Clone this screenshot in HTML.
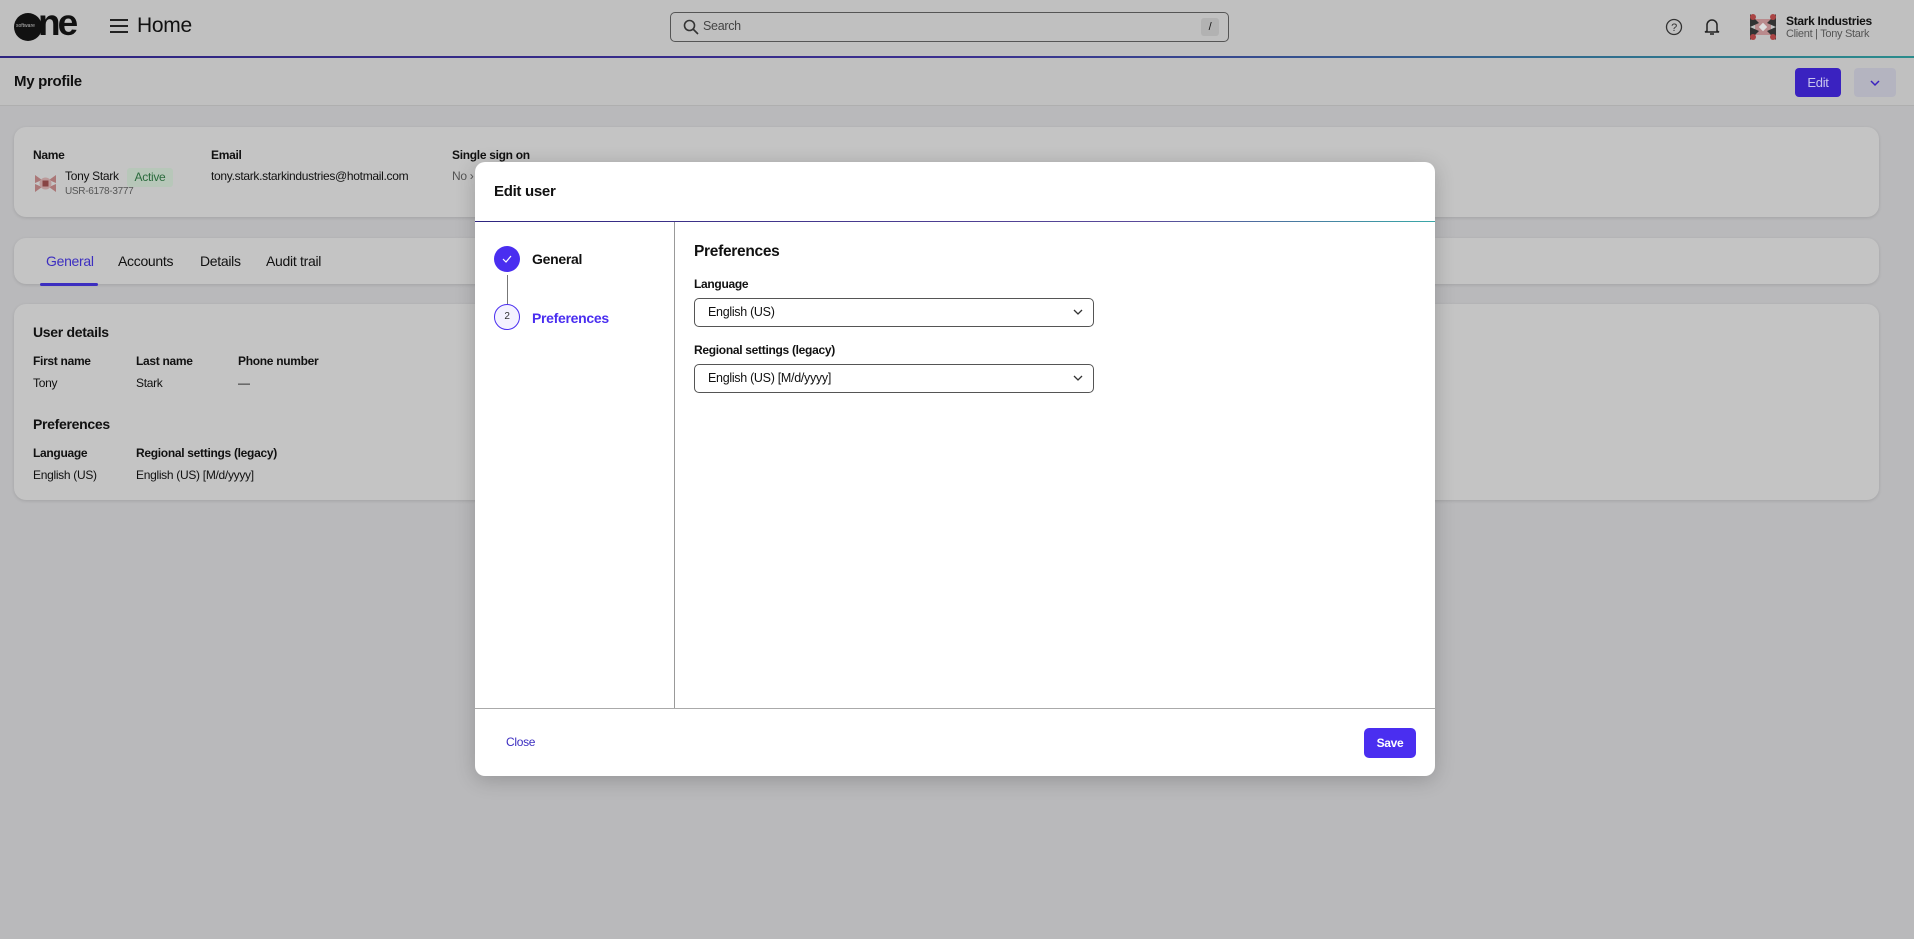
<!DOCTYPE html>
<html><head><meta charset="utf-8">
<style>
*{box-sizing:border-box;margin:0;padding:0}
body{width:1914px;height:939px;overflow:hidden;background:#b9b9bb;font-family:"Liberation Sans",Arial,sans-serif;color:#111;position:relative;font-size:13px;letter-spacing:-0.3px}
.abs{position:absolute}
.hdr{left:0;top:0;width:1914px;height:56px;background:#c0c0c0}
.grad{left:0;top:56px;width:1914px;height:2px;background:linear-gradient(90deg,#2e2580 0%,#3b2f8f 50%,#2a8c8c 100%)}
.sub{left:0;top:58px;width:1914px;height:48px;background:#c0c0c0;border-bottom:1px solid #afafaf}
.card{background:#c4c4c4;border-radius:12px;box-shadow:0 1px 3px rgba(0,0,0,.12)}
.lbl{font-weight:bold;font-size:12px;color:#111}
.modal{left:475px;top:162px;width:960px;height:614px;background:#fff;border-radius:10px;box-shadow:0 4px 20px rgba(0,0,0,.2);overflow:hidden}
.sel{position:absolute;left:219px;width:400px;height:29px;border:1px solid #555;border-radius:5px;padding-left:13px;line-height:27px;font-size:12.5px}
.sel svg{position:absolute;right:10px;top:9px}
</style></head><body>
<div class="abs hdr"></div>
<div class="abs" style="left:14px;top:13px;width:28px;height:28px;border-radius:50%;background:#111"></div>
<div class="abs" style="left:16px;top:23px;font-size:5px;color:#bbb;letter-spacing:0">software</div>
<div class="abs" style="left:38px;top:2px;font-size:37px;font-weight:bold;letter-spacing:-3px;color:#111">ne</div>
<svg class="abs" style="left:110px;top:18px" width="18" height="16"><path d="M0 2h18M0 8h18M0 14h18" stroke="#222" stroke-width="2"/></svg>
<div class="abs" style="left:137px;top:14px;font-size:21px;color:#111">Home</div>
<div class="abs" style="left:670px;top:12px;width:559px;height:30px;border:1px solid #555;border-radius:5px"></div>
<svg class="abs" style="left:683px;top:19px" width="16" height="16"><circle cx="6.5" cy="6.5" r="5" fill="none" stroke="#333" stroke-width="1.6"/><path d="M10 10l5 5" stroke="#333" stroke-width="1.6"/></svg>
<div class="abs" style="left:703px;top:19px;font-size:12.5px;color:#444">Search</div>
<div class="abs" style="left:1201px;top:18px;width:18px;height:18px;border-radius:3px;background:#b2b2b2;font-size:11px;text-align:center;line-height:18px">/</div>
<svg class="abs" style="left:1665px;top:18px" width="18" height="18"><circle cx="9" cy="9" r="7.5" fill="none" stroke="#333" stroke-width="1.3"/><text x="9" y="13" font-size="11" text-anchor="middle" fill="#333" font-family="Liberation Sans">?</text></svg>
<svg class="abs" style="left:1704px;top:17px" width="16" height="20"><path d="M3 14V8a5 5 0 0110 0v6l2 1H1z" fill="none" stroke="#222" stroke-width="1.5"/><path d="M6 17h4" stroke="#222" stroke-width="1.5"/></svg>
<svg class="abs" style="left:1750px;top:14px" width="26" height="26"><rect x="5" y="5" width="16" height="16" fill="#b98a8c"/><path d="M0 0l9 9-9 4zM26 0l-9 9 9 4zM0 26l9-9-9-4zM26 26l-9-9 9-4z" fill="#333"/><circle cx="3" cy="3" r="3" fill="#a44"/><circle cx="23" cy="23" r="3" fill="#a44"/><circle cx="23" cy="3" r="3" fill="#a44"/><circle cx="3" cy="23" r="3" fill="#a44"/><rect x="10" y="10" width="6" height="6" fill="#ddd" transform="rotate(45 13 13)"/></svg>
<div class="abs" style="left:1786px;top:14px;font-size:12px;font-weight:bold">Stark Industries</div>
<div class="abs" style="left:1786px;top:28px;font-size:11px;color:#555">Client | Tony Stark</div>
<div class="abs grad"></div>
<div class="abs sub"></div>
<div class="abs" style="left:14px;top:73px;font-size:15px;font-weight:bold">My profile</div>
<div class="abs" style="left:1795px;top:68px;width:46px;height:29px;background:#3a22c0;border-radius:4px;color:#c8c4ee;font-size:13px;text-align:center;line-height:29px">Edit</div>
<div class="abs" style="left:1854px;top:68px;width:42px;height:29px;background:#b4b4c0;border-radius:4px"></div>
<svg class="abs" style="left:1870px;top:79px" width="10" height="8"><path d="M1 2l4 4 4-4" fill="none" stroke="#3a22c0" stroke-width="1.5"/></svg>

<div class="abs card" style="left:14px;top:127px;width:1865px;height:90px"></div>
<div class="abs lbl" style="left:33px;top:148px">Name</div>
<svg class="abs" style="left:35px;top:173px" width="21" height="21"><path d="M0 2l7 5-7 3zM21 2l-7 5 7 3zM0 19l7-5-7-3zM21 19l-7-5 7-3z" fill="#a77"/><circle cx="10.5" cy="10.5" r="6" fill="#b99"/><rect x="7.5" y="7.5" width="6" height="6" fill="#844"/></svg>
<div class="abs" style="left:65px;top:169px;font-size:12px">Tony Stark</div>
<div class="abs" style="left:127px;top:168px;width:46px;height:19px;background:#b7c7b9;border-radius:3px;color:#2b6b3d;font-size:12px;text-align:center;line-height:19px">Active</div>
<div class="abs" style="left:65px;top:186px;font-size:10px;color:#555">USR-6178-3777</div>
<div class="abs lbl" style="left:211px;top:148px">Email</div>
<div class="abs" style="left:211px;top:169px;font-size:12px">tony.stark.starkindustries@hotmail.com</div>
<div class="abs lbl" style="left:452px;top:148px">Single sign on</div>
<div class="abs" style="left:452px;top:169px;font-size:12px;color:#555">No ›</div>

<div class="abs card" style="left:14px;top:238px;width:1865px;height:46px"></div>
<div class="abs" style="left:46px;top:253px;font-size:14px;color:#3c2ec0">General</div>
<div class="abs" style="left:118px;top:253px;font-size:14px">Accounts</div>
<div class="abs" style="left:200px;top:253px;font-size:14px">Details</div>
<div class="abs" style="left:266px;top:253px;font-size:14px">Audit trail</div>
<div class="abs" style="left:40px;top:283px;width:58px;height:3px;background:#3c2ec0;border-radius:2px"></div>

<div class="abs card" style="left:14px;top:304px;width:1865px;height:196px"></div>
<div class="abs" style="left:33px;top:324px;font-size:14px;font-weight:bold">User details</div>
<div class="abs lbl" style="left:33px;top:354px">First name</div>
<div class="abs lbl" style="left:136px;top:354px">Last name</div>
<div class="abs lbl" style="left:238px;top:354px">Phone number</div>
<div class="abs" style="left:33px;top:376px;font-size:12px">Tony</div>
<div class="abs" style="left:136px;top:376px;font-size:12px">Stark</div>
<div class="abs" style="left:238px;top:376px;font-size:12px">—</div>
<div class="abs" style="left:33px;top:416px;font-size:14px;font-weight:bold">Preferences</div>
<div class="abs lbl" style="left:33px;top:446px">Language</div>
<div class="abs lbl" style="left:136px;top:446px">Regional settings (legacy)</div>
<div class="abs" style="left:33px;top:468px;font-size:12px">English (US)</div>
<div class="abs" style="left:136px;top:468px;font-size:12px">English (US) [M/d/yyyy]</div>

<div class="abs modal">
 <div class="abs" style="left:19px;top:21px;font-size:15px;font-weight:bold">Edit user</div>
 <div class="abs" style="left:0;top:59px;width:960px;height:1px;background:linear-gradient(90deg,#2e2580,#5a4a9a 70%,#3aa8a8)"></div>
 <div class="abs" style="left:199px;top:60px;width:1px;height:486px;background:#999"></div>
 <div class="abs" style="left:0;top:546px;width:960px;height:1px;background:#aaa"></div>
 <div class="abs" style="left:19px;top:84px;width:26px;height:26px;border-radius:50%;background:#4a2ef0"></div>
 <svg class="abs" style="left:27px;top:92px" width="10" height="10"><path d="M1 5l3 3 5-6" fill="none" stroke="#fff" stroke-width="1.2"/></svg>
 <div class="abs" style="left:57px;top:89px;font-size:14px;font-weight:bold">General</div>
 <div class="abs" style="left:32px;top:113px;width:1px;height:30px;background:#777"></div>
 <div class="abs" style="left:19px;top:142px;width:26px;height:26px;border-radius:50%;border:1.5px solid #4a2ef0;background:#f4f2ff;font-size:10px;text-align:center;line-height:23px;color:#333">2</div>
 <div class="abs" style="left:57px;top:148px;font-size:14px;font-weight:bold;color:#4a2ef0">Preferences</div>
 <div class="abs" style="left:219px;top:81px;font-size:15.5px;font-weight:bold">Preferences</div>
 <div class="abs" style="left:219px;top:115px;font-size:12px;font-weight:bold">Language</div>
 <div class="sel" style="top:136px">English (US)<svg width="10" height="8"><path d="M1 2l4 4 4-4" fill="none" stroke="#333" stroke-width="1.3"/></svg></div>
 <div class="abs" style="left:219px;top:181px;font-size:12px;font-weight:bold">Regional settings (legacy)</div>
 <div class="sel" style="top:202px">English (US) [M/d/yyyy]<svg width="10" height="8"><path d="M1 2l4 4 4-4" fill="none" stroke="#333" stroke-width="1.3"/></svg></div>
 <div class="abs" style="left:31px;top:573px;font-size:12px;color:#3c2ec0">Close</div>
 <div class="abs" style="left:889px;top:566px;width:52px;height:30px;background:#4a2ef0;border-radius:5px;color:#fff;font-size:12px;font-weight:bold;text-align:center;line-height:30px">Save</div>
</div>
</body></html>
